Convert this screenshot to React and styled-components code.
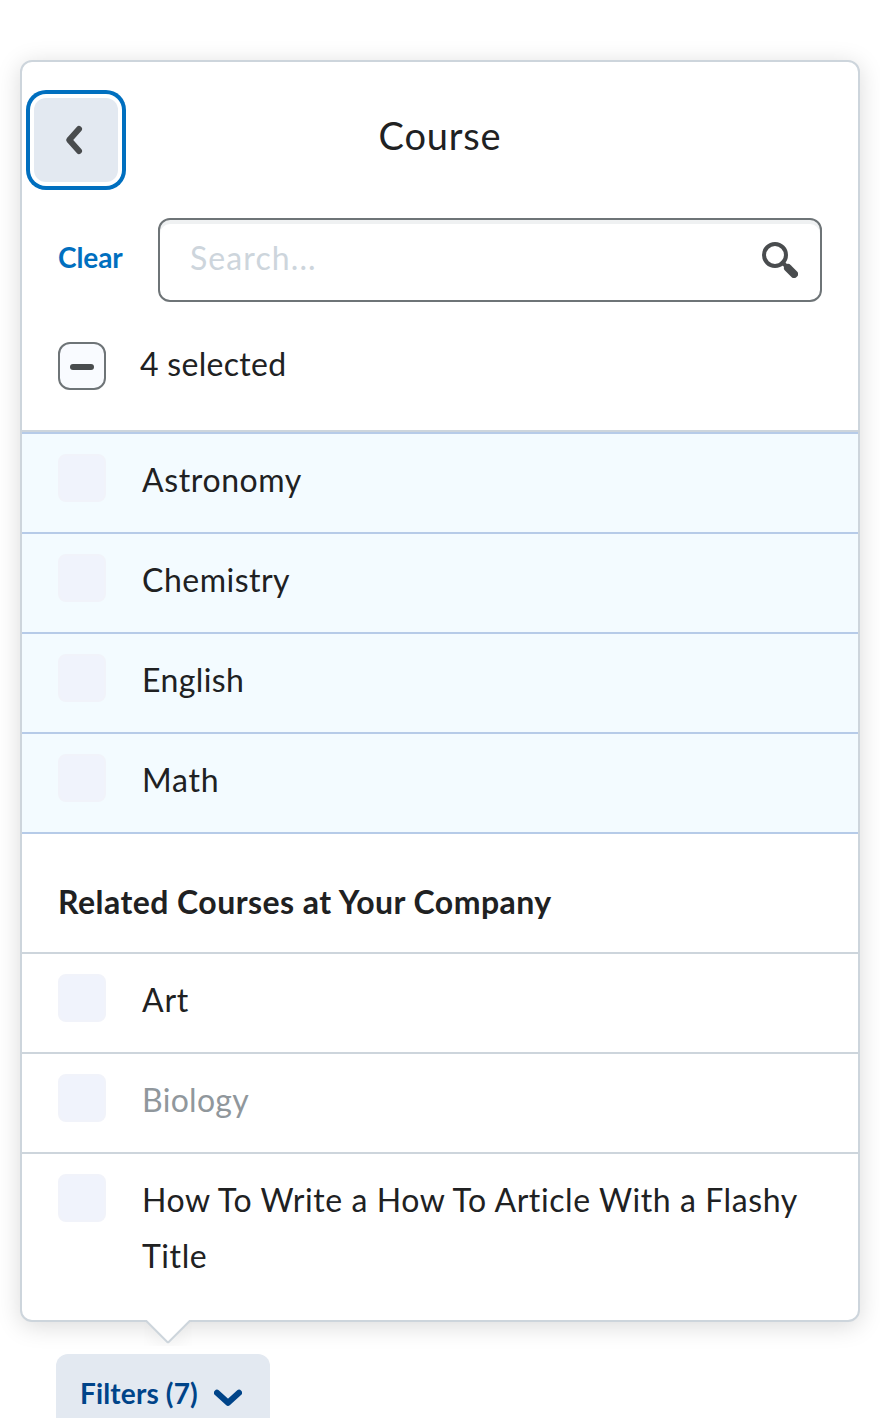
import React from 'react';
import styled, { createGlobalStyle } from 'styled-components';

const GlobalStyle = createGlobalStyle`
  *, *::before, *::after { box-sizing: border-box; }
  body {
    margin: 0;
    background: #ffffff;
    color: #202122;
    font-family: Lato, 'Liberation Sans', sans-serif;
    font-size: 32px;
    line-height: 56px;
    letter-spacing: 0.4px;
  }
`;

const Page = styled.main`
  width: 880px;
  height: 1418px;
  padding: 60px 20px 0;
  overflow: hidden;
`;

const Dropdown = styled.section`
  position: relative;
  height: 1262px;
  border: 2px solid #cdd5dc;
  border-radius: 12px;
  background: #ffffff;
  box-shadow: 0 4px 24px rgba(0, 0, 0, 0.15);
`;

const PointerClip = styled.div`
  position: absolute;
  left: 122px;
  top: 100%;
  width: 48px;
  height: 26px;
  overflow: hidden;
`;

const Pointer = styled.div`
  width: 34px;
  height: 34px;
  margin: -17px 0 0 7px;
  border: 2px solid #cdd5dc;
  border-radius: 2px;
  background: #ffffff;
  box-shadow: 8px 8px 24px -10px rgba(32, 33, 34, 0.2);
  transform: rotate(45deg);
`;

const Header = styled.header`
  display: grid;
  grid-template-columns: 84px 1fr 84px;
  padding: 36px 12px;
`;

const BackButton = styled.button`
  display: flex;
  align-items: center;
  justify-content: center;
  width: 84px;
  height: 84px;
  padding: 0;
  border: 0;
  border-radius: 12px;
  background: #e3e9f1;
  box-shadow: 0 0 0 4px #ffffff, 0 0 0 8px #006fbf;

  svg { margin-right: 4px; }
`;

const Title = styled.h1`
  margin: 9px 0 0;
  font-size: 38px;
  font-weight: 400;
  line-height: 56px;
  letter-spacing: 0.8px;
  text-align: center;
`;

const Tools = styled.div`
  display: flex;
  padding: 0 36px;
`;

const ClearButton = styled.button`
  width: 100px;
  height: 78px;
  padding: 0;
  border: 0;
  background: none;
  color: #006fbf;
  font: 700 28px/78px Lato, sans-serif;
  letter-spacing: -0.1px;
  text-align: left;
`;

const SearchBox = styled.div`
  display: flex;
  flex: 1;
  align-items: center;
  justify-content: space-between;
  height: 84px;
  padding: 0 22px 0 30px;
  border: 2px solid #6e7477;
  border-radius: 12px;
  box-shadow: inset 0 4px 0 #eff1f2;
`;

const Placeholder = styled.span`
  margin-top: -4px;
  color: #cdd5dc;
  letter-spacing: 1.1px;
`;

const SelectAll = styled.div`
  display: flex;
  height: 128px;
  padding: 40px 36px 0;
`;

const CheckBox = styled.span`
  display: flex;
  flex: none;
  align-items: center;
  justify-content: center;
  width: 48px;
  height: 48px;
  border: 2px solid ${(p) => (p.$mixed ? '#6e7477' : '#f1f3fa')};
  border-radius: ${(p) => (p.$mixed ? 12 : 8)}px;
  background: ${(p) => (p.$mixed ? '#f9fbff' : '#f0f3fc')};
`;

const MixedMark = styled.span`
  width: 24px;
  height: 6px;
  margin-top: 2px;
  border-radius: 3px;
  background: #494c4e;
`;

const SelectedCount = styled.span`
  margin: -6px 0 0 34px;
  letter-spacing: 0.3px;
`;

const List = styled.ul`
  margin: 0;
  padding: 0;
  list-style: none;
  border-top: ${(p) => (p.$selected ? '2px solid #cdd5dc' : '0')};
  border-bottom: ${(p) => (p.$selected ? '2px solid #b6cbe8' : '0')};
`;

const Row = styled.li`
  display: flex;
  padding: 18px 36px 24px;
  border-top: 2px solid ${(p) => (p.$selected ? '#b6cbe8' : '#cdd5dc')};
  background: ${(p) => (p.$selected ? '#f3fbff' : 'transparent')};

  ${CheckBox} { margin-top: 2px; }
`;

const RowLabel = styled.span`
  margin-left: 36px;
  color: ${(p) => (p.$disabled ? '#90979c' : 'inherit')};
  letter-spacing: ${(p) => p.$tracking ?? 0.4}px;
`;

const GroupTitle = styled.h2`
  height: 118px;
  margin: 0;
  padding: 40px 36px 0;
  font-size: 32px;
  font-weight: 700;
  line-height: 56px;
  letter-spacing: 0.46px;
`;

const FiltersButton = styled.button`
  display: flex;
  justify-content: space-between;
  width: 214px;
  height: 84px;
  margin: 32px 0 0 36px;
  padding: 0 28px 0 24px;
  border: 0;
  border-radius: 12px;
  background: #e3e9f1;
  color: #004489;
  font: 700 28px/78px Lato, sans-serif;
  letter-spacing: 0.15px;

  svg { margin-top: 34px; }
`;

const selectedCourses = [
  { name: 'Astronomy', tracking: 0.6 },
  { name: 'Chemistry', tracking: 0.5 },
  { name: 'English', tracking: 0.4 },
  { name: 'Math', tracking: 0.8 },
];
const relatedCourses = [
  { name: 'Art', tracking: 0.8 },
  { name: 'Biology', tracking: 0.3, disabled: true },
  { name: 'How To Write a How To Article With a Flashy Title', tracking: 0.57 },
];

function BackIcon() {
  return (
    <svg width="20" height="32" viewBox="0 0 20 32" fill="none">
      <path d="M15 4.9 5.2 16 15 27.1" stroke="#494c4e" strokeWidth="6" strokeLinecap="round" strokeLinejoin="round" />
    </svg>
  );
}

function SearchIcon() {
  return (
    <svg width="36" height="36" viewBox="0 0 36 36" fill="none" stroke="#494c4e" strokeLinecap="round">
      <circle cx="13" cy="13" r="11" strokeWidth="4" />
      <path d="m20.5 20.5 5 5" strokeWidth="4" />
      <path d="m26 26 6 6" strokeWidth="8" />
    </svg>
  );
}

function ChevronDown() {
  return (
    <svg width="28" height="20" viewBox="0 0 28 20" fill="none">
      <path d="m3 4.8 11 10L25 4.8" stroke="#004489" strokeWidth="6" strokeLinecap="round" strokeLinejoin="round" />
    </svg>
  );
}

export default function App() {
  return (
    <>
      <GlobalStyle />
      <Page>
        <Dropdown>
          <Header>
            <BackButton aria-label="Back"><BackIcon /></BackButton>
            <Title>Course</Title>
          </Header>
          <Tools>
            <ClearButton>Clear</ClearButton>
            <SearchBox>
              <Placeholder>Search...</Placeholder>
              <SearchIcon />
            </SearchBox>
          </Tools>
          <SelectAll>
            <CheckBox $mixed><MixedMark /></CheckBox>
            <SelectedCount>4 selected</SelectedCount>
          </SelectAll>
          <List $selected>
            {selectedCourses.map(({ name, tracking }) => (
              <Row key={name} $selected>
                <CheckBox />
                <RowLabel $tracking={tracking}>{name}</RowLabel>
              </Row>
            ))}
          </List>
          <GroupTitle>Related Courses at Your Company</GroupTitle>
          <List>
            {relatedCourses.map(({ name, tracking, disabled }) => (
              <Row key={name}>
                <CheckBox />
                <RowLabel $tracking={tracking} $disabled={disabled}>{name}</RowLabel>
              </Row>
            ))}
          </List>
          <PointerClip><Pointer /></PointerClip>
        </Dropdown>
        <FiltersButton>
          Filters (7)
          <ChevronDown />
        </FiltersButton>
      </Page>
    </>
  );
}
